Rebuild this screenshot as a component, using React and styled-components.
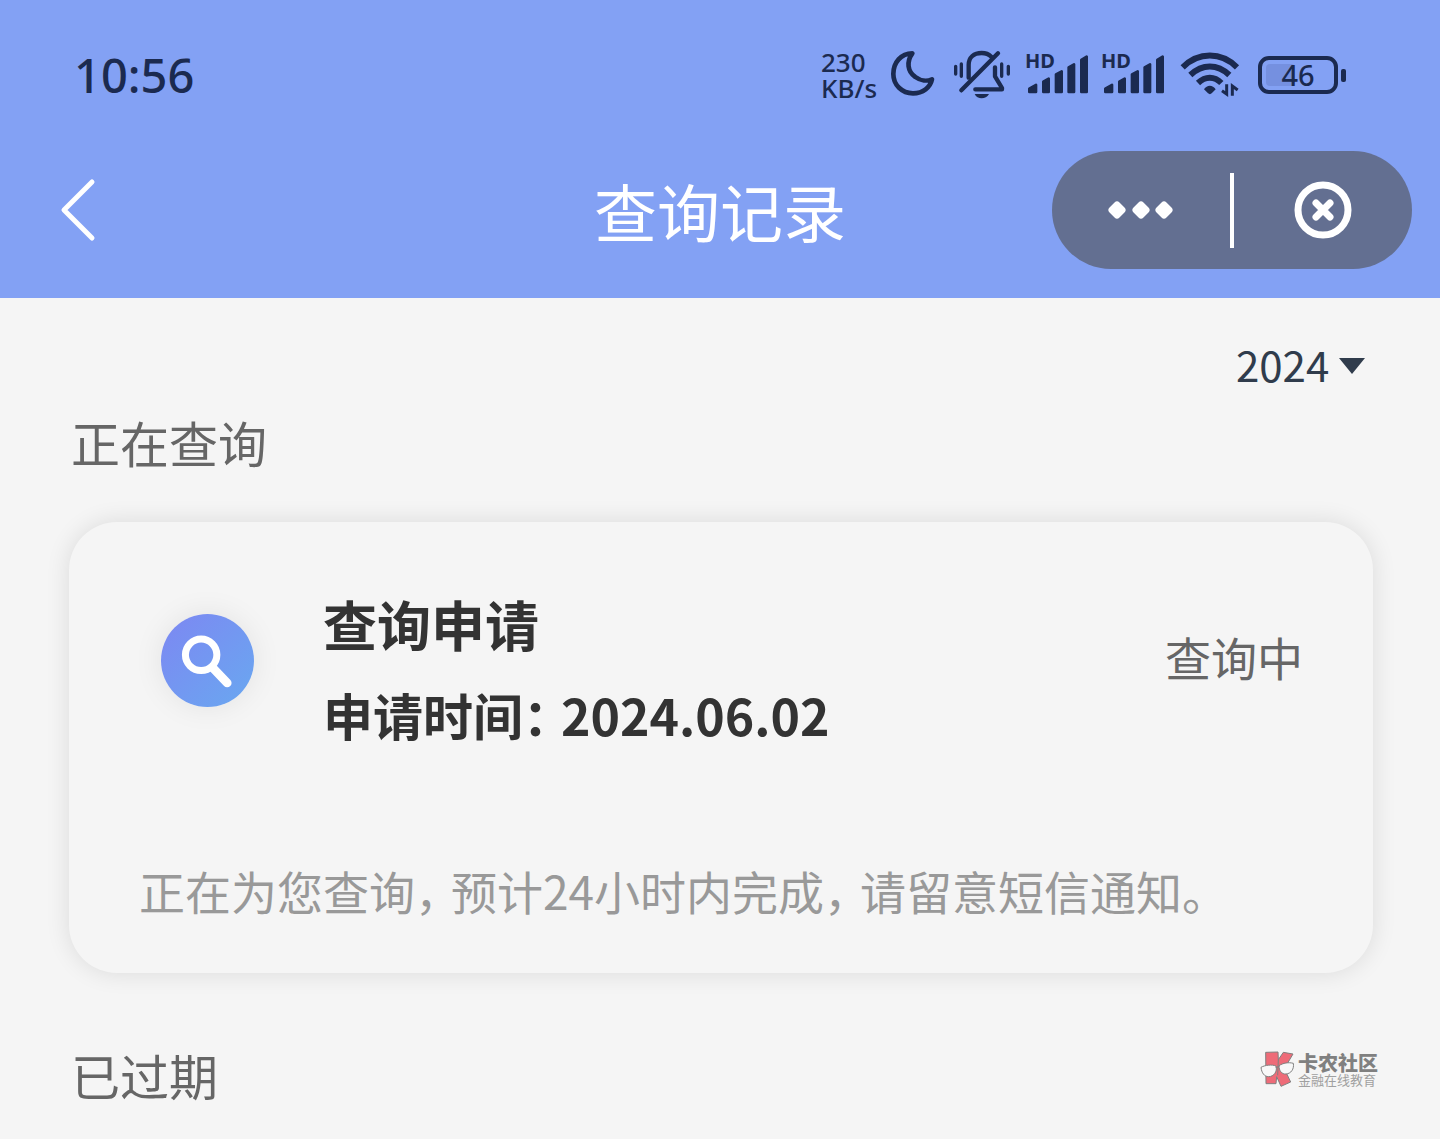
import React, { useState } from 'react'
import styled, { createGlobalStyle } from 'styled-components'

const GlobalStyle = createGlobalStyle`
  * {
    box-sizing: border-box;
  }

  body {
    margin: 0;
    background: #f5f5f5;
    font-family: "Noto Sans CJK SC", sans-serif;
  }
`

const Header = styled.header`
  padding-bottom: 29px;
  background: #83a1f4;
`

const StatusBar = styled.div`
  display: flex;
  align-items: center;
  justify-content: space-between;
  height: 150px;
  padding: 0 94px 0 74px;
  color: #1b2a50;
  font-family: "Noto Sans", sans-serif;
`

const Clock = styled.time`
  font-size: 47px;
  font-weight: 500;
`

const StatusIcons = styled.div`
  display: flex;
  align-items: center;
  gap: 12px;
`

const Speed = styled.div`
  width: 57px;
  font-size: 26px;
  font-weight: 500;
  line-height: 26px;
`

const StatusSvg = styled.svg`
  display: block;
  height: 54px;
`

const SignalBox = styled.div`
  position: relative;
`

const SignalLabel = styled.span`
  position: absolute;
  top: 0;
  left: 0;
  font-size: 20px;
  font-weight: 700;
  line-height: 26px;
`

const Battery = styled.div`
  display: flex;
  align-items: center;
  gap: 3px;
`

const BatteryBody = styled.div`
  position: relative;
  display: flex;
  align-items: center;
  justify-content: center;
  width: 80px;
  height: 38px;
  border: 4px solid #1b2a50;
  border-radius: 11px;
  font-size: 29px;
  font-weight: 500;
  line-height: 30px;
`

const BatteryTrack = styled.div`
  position: absolute;
  inset: 4px;
`

const BatteryLevel = styled.div`
  height: 100%;
  border-radius: 4px;
  background: #7590e0;
`

const BatteryText = styled.span`
  position: relative;
`

const BatteryTip = styled.div`
  width: 5px;
  height: 13px;
  border-radius: 2px;
  background: #1b2a50;
`

const Nav = styled.nav`
  display: grid;
  grid-template-columns: 1fr auto 1fr;
  align-items: center;
  padding: 1px 28px 0;
`

const IconButton = styled.button`
  display: flex;
  align-items: center;
  justify-content: center;
  padding: 0;
  border: 0;
  background: none;
  color: #fff;
  cursor: pointer;
`

const BackButton = styled(IconButton)`
  justify-self: start;
  width: 100px;
  height: 80px;
`

const Title = styled.h1`
  margin: 0;
  color: #fff;
  font-size: 63px;
  font-weight: 400;
  line-height: 90px;
`

const Capsule = styled.div`
  display: flex;
  align-items: center;
  justify-self: end;
  width: 360px;
  height: 118px;
  border-radius: 59px;
  background: #636f91;
`

const CapsuleButton = styled(IconButton)`
  flex: 1;
  height: 100%;
`

const Divider = styled.div`
  width: 4px;
  height: 75px;
  background: #fff;
`

const Main = styled.main`
  padding: 34px 67px 30px 69px;
`

const Filter = styled.div`
  display: flex;
  align-items: center;
  justify-content: flex-end;
  gap: 9px;
  padding-right: 8px;
  color: #303c4c;
`

const YearSelect = styled.select`
  appearance: none;
  height: 62px;
  padding: 0;
  border: 0;
  background: none;
  color: inherit;
  font-family: inherit;
  font-size: 42px;
`

const SectionHead = styled.div`
  display: flex;
  align-items: flex-start;
  justify-content: space-between;
  margin-top: ${props => props.$space};
`

const SectionTitle = styled.h2`
  margin: 0;
  padding-left: 2px;
  color: #666;
  font-size: 49px;
  font-weight: 400;
  line-height: 60px;
`

const Card = styled.article`
  margin-top: 50px;
  padding: 59px 70px 53px;
  border-radius: 48px;
  background: #f5f5f5;
  box-shadow: 0 0 24px rgba(0, 0, 0, 0.11);
`

const CardRow = styled.div`
  display: flex;
  align-items: center;
  padding-left: 22px;
`

const Badge = styled.div`
  flex: none;
  width: 93px;
  height: 93px;
  border-radius: 50%;
  background: linear-gradient(135deg, #7d87f2, #69a8f0);
  box-shadow: 0 0 30px rgba(0, 0, 0, 0.08);
`

const CardText = styled.div`
  flex: 1;
  padding-left: 69px;
  color: #333;
`

const CardTitle = styled.h3`
  margin: 0;
  font-size: 54px;
  font-weight: 700;
  line-height: 86px;
`

const CardDate = styled.p`
  margin: 22px 0 0;
  font-size: 50px;
  font-weight: 700;
  line-height: 50px;
`

const CardState = styled.span`
  padding-bottom: 8px;
  color: #666;
  font-size: 46px;
  line-height: 60px;
`

const Message = styled.p`
  margin: 121px 0 0;
  color: #999;
  font-size: 46px;
  line-height: 60px;
`

// half-width form of full-width punctuation
const Mark = styled.span`
  margin-right: 13px;
  font-feature-settings: "halt";
`

const Community = styled.div`
  display: flex;
  align-items: center;
  gap: 2px;
  margin-right: -5px;
  padding-top: 5px;
  color: #808080;
`

const CommunityName = styled.div`
  font-size: 20px;
  font-weight: 900;
  line-height: 21px;
`

const CommunityNote = styled.div`
  color: #a0a0a0;
  font-size: 13px;
  line-height: 14px;
`

const MoonIcon = () => (
  <StatusSvg width="48" viewBox="270 54 144 162" fill="none" stroke="currentColor" strokeWidth="14" strokeLinejoin="round" aria-hidden="true">
    <path d="M337 70C303 70 280 98 280 132C280 165 306 190 339 190C369 190 391 172 396 148C382 154 362 153 346 141C322 125 319 95 337 70Z" />
  </StatusSvg>
)

const MutedIcon = () => (
  <StatusSvg width="63" viewBox="450 54 189 162" fill="none" stroke="currentColor" strokeWidth="13" strokeLinecap="round" aria-hidden="true">
    <path d="M506 143V105C506 82 522 69 545 69C557 69 567 73 574 80" />
    <path d="M594 70L484 181" />
    <path d="M585 112V139L606 174V178H526" strokeLinejoin="round" />
    <path d="M467 109V132M484 102V139M605 102V139M625 109V132" strokeWidth="10" />
    <path d="M524 192H567C562 201 554 205 545 205C536 205 528 201 524 192Z" fill="currentColor" stroke="none" />
  </StatusSvg>
)

const Signal = () => (
  <SignalBox>
    <StatusSvg width="64" viewBox="675 54 192 162" fill="currentColor" stroke="currentColor" strokeWidth="8" strokeLinejoin="round" aria-hidden="true">
      <path d="M688 176L708 165V186H688ZM730 155L746 146V186H730ZM768 133L785 124V186H768ZM806 112L822 103V186H806ZM844 90L860 80V186H844Z" />
    </StatusSvg>
    <SignalLabel>HD</SignalLabel>
  </SignalBox>
)

const WifiIcon = () => (
  <StatusSvg width="69" viewBox="261 54 207 162" fill="none" stroke="currentColor" strokeWidth="18" aria-hidden="true">
    <path d="M278 112C326 65 393 65 441 112" />
    <path d="M301 135C337 101 382 101 418 135" />
    <path d="M324 159C346 138 373 138 394 159" />
    <path d="M342 178C351 164 368 164 377 178L365 190Q360 195 354 190Z" fill="currentColor" stroke="none" />
    <path d="M410 163V192L396 182M427 197V168L443 180" strokeWidth="9" />
  </StatusSvg>
)

const BackIcon = () => (
  <svg width="36" height="64" viewBox="0 0 36 64" fill="none" stroke="currentColor" strokeWidth="5" strokeLinecap="round" strokeLinejoin="round" aria-hidden="true">
    <path d="M32 4L4 32L32 60" />
  </svg>
)

const MoreIcon = () => (
  <svg width="66" height="18" viewBox="-1 0 66 18" fill="currentColor" stroke="currentColor" strokeWidth="7" strokeLinejoin="round" aria-hidden="true">
    <path d="M8 4L13 9L8 14L3 9ZM32 4L37 9L32 14L27 9ZM55 4L60 9L55 14L50 9Z" />
  </svg>
)

const CloseIcon = () => (
  <svg width="58" height="58" viewBox="0 0 58 58" fill="none" stroke="currentColor" strokeWidth="7" strokeLinecap="round" aria-hidden="true">
    <circle cx="29" cy="29" r="25" />
    <path d="M22 22L36 36M36 22L22 36" />
  </svg>
)

const CaretIcon = () => (
  <svg width="26" height="22" viewBox="0 0 26 22" fill="currentColor" aria-hidden="true">
    <path d="M0 6H26L13 22Z" />
  </svg>
)

const SearchIcon = () => (
  <svg width="93" height="93" viewBox="124 105 278 278" fill="none" stroke="#fff" aria-hidden="true">
    <circle cx="244" cy="227" r="47" strokeWidth="21" />
    <path d="M280 267L322 311" strokeWidth="26" strokeLinecap="round" />
  </svg>
)

const CommunityLogo = () => (
  <svg width="36" height="38" viewBox="60 62 108 114" strokeLinejoin="round" aria-hidden="true">
    <path d="M77 69L114 68L115 91L130 69L159 74L133 118L152 158L123 171L110 142L108 163L78 163Z" fill="#ee6b78" stroke="#808080" strokeWidth="3" />
    <path d="M115 91L113 138" stroke="#808080" strokeWidth="3" />
    <path d="M63 114C75 107 96 105 108 110C113 127 101 142 86 142C73 142 65 131 63 114ZM117 109C129 101 146 98 160 102C163 119 153 133 138 134C125 135 117 124 117 109Z" fill="#f8f8f8" stroke="#808080" strokeWidth="3" />
    <path d="M107 114L118 112" stroke="#808080" strokeWidth="3" />
  </svg>
)

const batteryPercent = 46

const App = () => {
  const [year, setYear] = useState('2024')

  return (
    <>
      <GlobalStyle />
      <Header>
        <StatusBar>
          <Clock>10:56</Clock>
          <StatusIcons>
            <Speed>
              <div>230</div>
              <div>KB/s</div>
            </Speed>
            <MoonIcon />
            <MutedIcon />
            <Signal />
            <Signal />
            <WifiIcon />
            <Battery>
              <BatteryBody>
                <BatteryTrack>
                  <BatteryLevel style={{ width: `${batteryPercent}%` }} />
                </BatteryTrack>
                <BatteryText>{batteryPercent}</BatteryText>
              </BatteryBody>
              <BatteryTip />
            </Battery>
          </StatusIcons>
        </StatusBar>
        <Nav>
          <BackButton type="button" aria-label="返回"><BackIcon /></BackButton>
          <Title>查询记录</Title>
          <Capsule>
            <CapsuleButton type="button" aria-label="更多"><MoreIcon /></CapsuleButton>
            <Divider />
            <CapsuleButton type="button" aria-label="关闭"><CloseIcon /></CapsuleButton>
          </Capsule>
        </Nav>
      </Header>
      <Main>
        <Filter>
          <YearSelect aria-label="年份" value={year} onChange={e => setYear(e.target.value)}>
            <option value="2024">2024</option>
            <option value="2023">2023</option>
          </YearSelect>
          <CaretIcon />
        </Filter>
        <SectionHead $space="18px">
          <SectionTitle>正在查询</SectionTitle>
        </SectionHead>
        <Card>
          <CardRow>
            <Badge><SearchIcon /></Badge>
            <CardText>
              <CardTitle>查询申请</CardTitle>
              <CardDate>申请时间<Mark>：</Mark>2024.06.02</CardDate>
            </CardText>
            <CardState>查询中</CardState>
          </CardRow>
          <Message>
            正在为您查询<Mark>，</Mark>预计24小时内完成<Mark>，</Mark>请留意短信通知。
          </Message>
        </Card>
        <SectionHead $space="72px">
          <SectionTitle>已过期</SectionTitle>
          <Community>
            <CommunityLogo />
            <div>
              <CommunityName>卡农社区</CommunityName>
              <CommunityNote>金融在线教育</CommunityNote>
            </div>
          </Community>
        </SectionHead>
      </Main>
    </>
  )
}

export default App
